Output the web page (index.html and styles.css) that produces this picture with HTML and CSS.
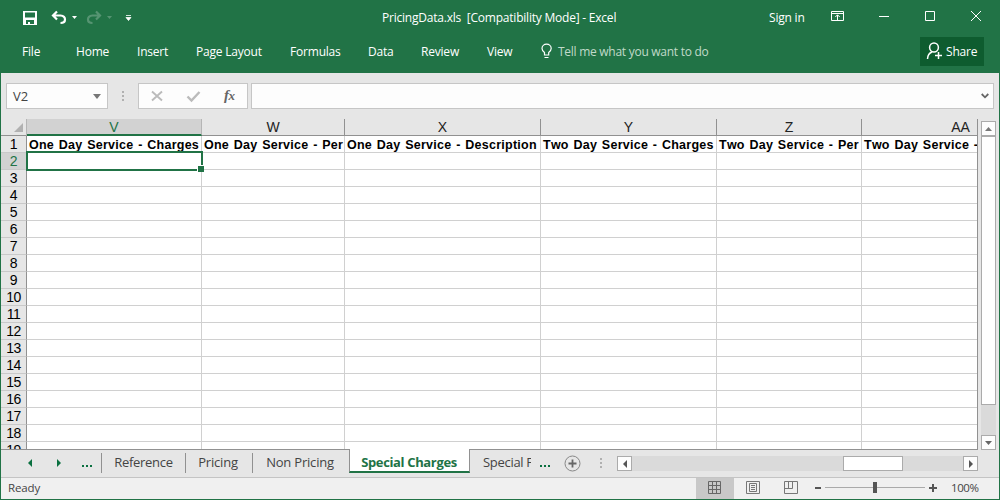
FILE: index.html
```html
<!DOCTYPE html>
<html lang="en">
<head>
<meta charset="utf-8">
<title>PricingData.xls - Excel</title>
<link rel="stylesheet" href="styles.css">
</head>
<body>
<div class="window">
  <header class="ribbon">
    <div class="titlebar">
      <svg class="quick" width="150" height="35" viewBox="0 0 150 35">
        <path fill="#fff" fill-rule="evenodd" d="M23 11h14v14H23zM25 12.500v5h10v-5zM26 20v4h2v-2h2v2h4v-4z"/>
        <path d="M57 11.500L53 15.500L57 19.500M53.500 15.500H60.500Q65 16 65 19.500Q65 23 60.500 23" fill="none" stroke="#fff" stroke-width="2.200"/>
        <path d="M72 16h5l-2.500 3z" fill="#fff"/>
        <g opacity=".24"><path d="M96 11.500L100 15.500L96 19.500M99.500 15.500H92.500Q88 16 88 19.500Q88 23 92.500 23" fill="none" stroke="#fff" stroke-width="2.200"/><path d="M107 16h5l-2.500 3z" fill="#fff"/></g>
        <path d="M126 15.500h5M126 17.500h5l-2.500 3z" fill="#fff" stroke="#fff" stroke-width=".8"/>
      </svg>
      <div class="title">PricingData.xls&nbsp; [Compatibility Mode] - Excel</div>
      <div class="signin">Sign in</div>
      <svg class="controls" width="170" height="35" viewBox="830 0 170 35" fill="none" stroke="#fff">
        <path d="M831.500 11.500h12v9h-12zM831.500 13.500h12M837.500 20v-5M835.300 17l2.200-2.200l2.200 2.200M879 16.500h10M925.500 11.500h9v9h-9zM971 11l10 10M981 11l-10 10"/>
      </svg>
    </div>
    <nav class="menu">
      <span>File</span><span>Home</span><span>Insert</span><span>Page Layout</span><span>Formulas</span><span>Data</span><span>Review</span><span>View</span>
      <svg width="17" height="18" viewBox="541 41 17 18" fill="none" stroke="#fff" stroke-width="1.200"><path d="M544.500 54v-2.500Q542 49.500 542 47.500A4.600 4.300 0 0 1 551.200 47.500Q551.200 49.500 548.700 51.500V54zM544.500 56.500h4"/></svg>
      <span class="tell">Tell me what you want to do</span>
      <div class="share">
        <svg width="18" height="20" viewBox="925 41 18 20" fill="none" stroke="#fff" stroke-width="1.500"><circle cx="934" cy="47.500" r="4.400"/><path d="M927.500 59Q927.800 53.500 932 52M938.500 52v7M935 55.500h7"/></svg>
        <span>Share</span>
      </div>
    </nav>
  </header>

  <section class="formula">
    <div class="namebox"><span>V2</span><svg width="8" height="5"><path d="M0 0h8L4 5z" fill="#777"/></svg></div>
    <svg class="grip" width="3" height="12"><path d="M0 1h2v2H0zM0 5h2v2H0zM0 9h2v2H0z" fill="#b0b0b0"/></svg>
    <div class="actions">
      <svg width="108" height="24" viewBox="139 84 108 24" fill="none"><path d="M152 91.500l10 9M162 91.500l-10 9" stroke="#bbb" stroke-width="1.900"/><path d="M187.500 96.500l4 4l8-8.500" stroke="#bbb" stroke-width="2.400"/></svg>
      <span class="fx">f<small>x</small></span>
    </div>
    <div class="entry"><svg width="8" height="6"><path d="M.7 1L4 4.300L7.300 1" fill="none" stroke="#666" stroke-width="1.800"/></svg></div>
  </section>

  <main class="work">
    <div class="sheet">
      <div class="row heads">
        <div class="corner"><svg width="9" height="9"><path d="M9 0v9H0z" fill="#b1b1b1"/></svg></div>
        <div class="on">V</div><div>W</div><div>X</div><div>Y</div><div>Z</div><div class="aa"><span>AA</span></div>
      </div>
      <div class="row names"><b>1</b><div>One Day Service - Charges</div><div>One Day Service - Per</div><div>One Day Service - Description</div><div>Two Day Service - Charges</div><div>Two Day Service - Per</div><div>Two Day Service - Per</div></div>
      <div class="row current"><b>2</b><div class="selected"></div><div></div><div></div><div></div><div></div><div></div></div>
      <div class="row"><b>3</b><div></div><div></div><div></div><div></div><div></div><div></div></div>
      <div class="row"><b>4</b><div></div><div></div><div></div><div></div><div></div><div></div></div>
      <div class="row"><b>5</b><div></div><div></div><div></div><div></div><div></div><div></div></div>
      <div class="row"><b>6</b><div></div><div></div><div></div><div></div><div></div><div></div></div>
      <div class="row"><b>7</b><div></div><div></div><div></div><div></div><div></div><div></div></div>
      <div class="row"><b>8</b><div></div><div></div><div></div><div></div><div></div><div></div></div>
      <div class="row"><b>9</b><div></div><div></div><div></div><div></div><div></div><div></div></div>
      <div class="row"><b>10</b><div></div><div></div><div></div><div></div><div></div><div></div></div>
      <div class="row"><b>11</b><div></div><div></div><div></div><div></div><div></div><div></div></div>
      <div class="row"><b>12</b><div></div><div></div><div></div><div></div><div></div><div></div></div>
      <div class="row"><b>13</b><div></div><div></div><div></div><div></div><div></div><div></div></div>
      <div class="row"><b>14</b><div></div><div></div><div></div><div></div><div></div><div></div></div>
      <div class="row"><b>15</b><div></div><div></div><div></div><div></div><div></div><div></div></div>
      <div class="row"><b>16</b><div></div><div></div><div></div><div></div><div></div><div></div></div>
      <div class="row"><b>17</b><div></div><div></div><div></div><div></div><div></div><div></div></div>
      <div class="row"><b>18</b><div></div><div></div><div></div><div></div><div></div><div></div></div>
      <div class="row"><b>19</b><div></div><div></div><div></div><div></div><div></div><div></div></div>
    </div>
    <div class="vscroll">
      <div class="btn"><svg width="7" height="4"><path d="M0 4h7L3.500 0z" fill="#777"/></svg></div>
      <div class="vthumb"></div>
      <div class="btn down"><svg width="7" height="4"><path d="M0 0h7L3.500 4z" fill="#666"/></svg></div>
    </div>
  </main>

  <div class="tabs">
    <div class="tabnav">
      <svg width="34" height="8"><path d="M4 0v8L0 4zM29 0v8l4-4z" fill="#0a7040"/></svg>
      <svg class="more" width="11" height="2"><path d="M0 0h2v2H0zM4 0h2v2H4zM8 0h2v2H8z" fill="#0a7040"/></svg>
    </div>
    <div class="tab t1">Reference</div><div class="tab t2">Pricing</div><div class="tab t3">Non Pricing</div>
    <div class="tab active">Special Charges</div>
    <div class="tab cut"><span>Special Fees</span></div>
    <svg class="more2" width="11" height="2"><path d="M0 0h2v2H0zM4 0h2v2H4zM8 0h2v2H8z" fill="#0a7040"/></svg>
    <svg class="add" width="17" height="17" fill="none"><circle cx="8.500" cy="8.500" r="7.500" stroke="#888"/><path d="M8.500 4.500v8M4.500 8.500h8" stroke="#666" stroke-width="1.800"/></svg>
    <svg class="grip2" width="3" height="12"><path d="M0 1h2v2H0zM0 5h2v2H0zM0 9h2v2H0z" fill="#b0b0b0"/></svg>
    <div class="hscroll">
      <div class="btn"><svg width="4" height="8"><path d="M4 0v8L0 4z" fill="#555"/></svg></div>
      <div class="hthumb"></div>
      <div class="btn"><svg width="4" height="8"><path d="M0 0v8l4-4z" fill="#555"/></svg></div>
    </div>
  </div>

  <footer class="status">
    <span class="ready">Ready</span>
    <svg class="views" width="246" height="21" viewBox="696 478 246 21" fill="none" stroke="#777">
      <path d="M696 478h38v21h-38z" fill="#c8c8c8" stroke="none"/>
      <path d="M708.500 481.500h12v12h-12zM712.500 481.500v12M716.500 481.500v12M708.500 485.500h12M708.500 489.500h12" stroke="#666"/>
      <path d="M746.500 481.500h13v12h-13zM749.500 483.500h7v8h-7zM751 485.500h4M751 487.500h4M751 489.500h4"/>
      <path d="M784.500 481.500h13v12h-13zM784.500 488.500h8v-7M788.500 481.500v7"/>
      <path d="M825 487.500h100" stroke="#aaa"/>
      <path d="M815 488h6M929 488h8M933 484v8" stroke="#555" stroke-width="2"/>
      <path d="M873 482h4v11h-4z" fill="#555" stroke="none"/>
    </svg>
    <span class="zoom">100%</span>
  </footer>
</div>
</body>
</html>
```
FILE: styles.css
```css
* { box-sizing: border-box; }
body { margin: 0; font-family: "Open Sans", "Noto Sans", sans-serif; font-size: 12px; }
svg { display: block; flex: none; }
.window { width: 1000px; height: 500px; display: flex; flex-direction: column; overflow: hidden; background: #e6e6e6; border: solid #217346; border-width: 0 1px 1px; }

.ribbon { height: 73px; flex: none; margin: 0 -1px; background: #217346; color: #fff; }
.titlebar { height: 35px; display: grid; grid-template-columns: 382px 387px 61px 170px; align-items: center; white-space: pre; }
.title { letter-spacing: -.22px; line-height: 33px; }
.signin { letter-spacing: -.2px; line-height: 33px; }
.menu { height: 32px; display: grid; grid-template-columns: 54px 61px 59px 94px 78px 53px 66px 54px 17px 362px 64px; padding-left: 22px; align-items: center; white-space: nowrap; letter-spacing: -.2px; }
.menu .tell { color: #c0dac9; letter-spacing: -.27px; }
.share { height: 29px; background: #0e5c2f; display: flex; align-items: center; padding-left: 5px; gap: 3px; }

.formula { height: 46px; flex: none; display: flex; align-items: flex-start; padding: 10px 0 0 5px; }
.namebox, .actions, .entry { height: 26px; background: #fdfdfd; border: 1px solid #c6c6c6; flex: none; }
.namebox { width: 102px; display: flex; align-items: center; justify-content: space-between; padding: 0 6px; color: #444; font-size: 13px; }
.grip { margin: 7px 13px 0 14px; }
.actions { width: 110px; display: grid; }
.actions > * { grid-area: 1 / 1; }
.fx { padding-left: 85px; font: italic bold 15px/22px "Liberation Serif", serif; color: #666; letter-spacing: -.5px; }
.fx small { font-size: 13px; }
.entry { width: 743px; margin-left: 3px; display: flex; justify-content: flex-end; align-items: center; padding-right: 4px; }

.work { height: 331px; flex: none; display: flex; gap: 3px; font-family: "Liberation Sans", Arial, sans-serif; }
.sheet { width: 977px; height: 331px; overflow: hidden; background: #fff; border-right: 1px solid #919191; border-bottom: 1px solid #919191; }
.row { display: grid; grid-template-columns: 26px 175px 143px 196px 176px 145px 115px; grid-template-rows: 17px; height: 17px; }
.row > div { border-right: 1px solid #d0d0d0; border-bottom: 1px solid #d0d0d0; white-space: pre; min-width: 0; }
.row > div:last-child { border-right: 0; }
.row > b { font-weight: normal; font-size: 14px; line-height: 17px; text-align: center; background: #e6e6e6; border-right: 1px solid #919191; border-bottom: 1px solid #c9c9c9; letter-spacing: -.5px; }
.row.heads { background: #e6e6e6; }
.row.heads > div { border-color: #919191; text-align: center; font-size: 14px; line-height: 17px; color: #222; }
.row.heads .corner { display: flex; align-items: flex-end; justify-content: flex-end; padding: 0 3px 3px 0; border-right-color: #b5b5b5; }
.row.heads .on { background: #d2d2d2; color: #217346; border-bottom: 2px solid #217346; border-right-color: #b5b5b5; }
.row.heads .aa { padding-left: 82px; }
.row.names > div { font-size: 12.500px; font-weight: bold; line-height: 18px; padding-left: 2px; overflow: hidden; letter-spacing: .25px; word-spacing: 1px; font-kerning: none; color: #000; }
.row.current > b { background: #d2d2d2; color: #217346; }
.row > .selected { position: relative; border: 0; }
.selected::before { content: ""; position: absolute; inset: -2px -1px -1px -1px; border: 2px solid #217346; }
.selected::after { content: ""; position: absolute; right: -2px; bottom: -2px; width: 6px; height: 6px; background: #217346; border: solid #fff; border-width: 1px 0 0 1px; }

.vscroll { width: 15px; height: 329px; margin-top: 2px; background: #dadada; display: flex; flex-direction: column; }
.btn { width: 15px; height: 15px; flex: none; background: #fdfdfd; border: 1px solid #ababab; display: flex; align-items: center; justify-content: center; }
.vthumb { height: 269px; background: #fff; border: 1px solid #ababab; }
.down { margin-top: auto; }

.tabs { height: 27px; flex: none; display: flex; font-size: 13px; color: #444; white-space: nowrap; }
.tabnav { width: 101px; display: flex; border-right: 1px solid #919191; margin: 3px 0 4px; padding: 6px 0 0 27px; }
.more { margin: 6px 0 0 20px; }
.tab { flex: none; line-height: 18px; margin: 3px 0 4px; border-right: 1px solid #919191; text-align: center; letter-spacing: -.3px; }
.t1 { width: 84px; } .t2 { width: 67px; padding-right: 2px; letter-spacing: -.2px; }
.t3 { width: 96px; border: 0; padding-right: 2px; letter-spacing: -.2px; }
.active { width: 121px; height: 24px; margin: -1px 0 0; padding: 4px 1px 0 0; background: #fff; color: #217346; font-weight: bold; letter-spacing: -.35px; border: solid #919191; border-width: 0 1px; border-bottom: 2px solid #217346; }
.cut { width: 70px; border: 0; text-align: left; padding-left: 13px; }
.cut span { display: block; width: 48px; overflow: hidden; }
.more2 { margin-top: 15px; }
.add { margin: 5px 0 0 13px; }
.grip2 { margin: 7px 0 0 19px; }
.hscroll { width: 361px; height: 15px; margin: 6px 0 0 14px; background: #dadada; display: flex; }
.hthumb { width: 60px; margin: 0 60px 0 auto; background: #fff; border: 1px solid #ababab; }

.status { height: 22px; flex: none; background: #f0f0f0; border-top: 1px solid #c4c4c4; display: grid; grid-template-columns: 695px 255px 1fr; color: #444; font-size: 11.500px; line-height: 20px; }
.ready { padding-left: 7px; letter-spacing: -.15px; }
.zoom { letter-spacing: -.4px; }
```
